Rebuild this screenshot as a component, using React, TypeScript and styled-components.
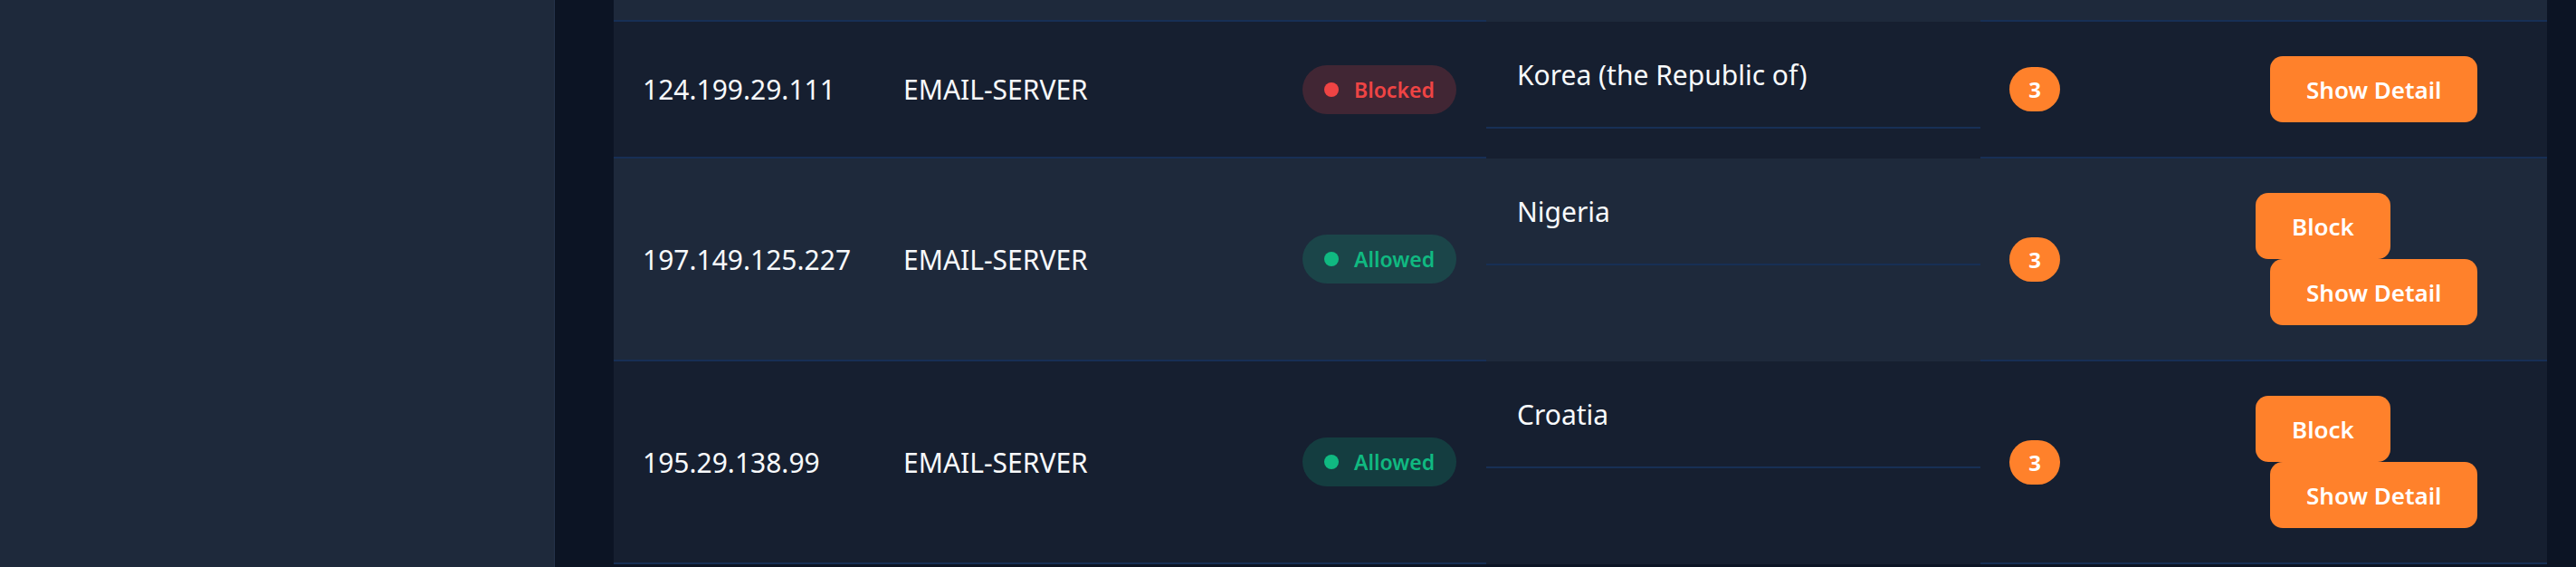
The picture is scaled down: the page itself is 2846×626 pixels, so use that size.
import React from 'react'
import styled, { createGlobalStyle } from 'styled-components'

const GlobalStyle = createGlobalStyle`
  html, body {
    margin: 0;
    padding: 0;
    background: #0c1424;
    font-family: 'Noto Sans', 'Open Sans', sans-serif;
    overflow: hidden;
  }
`

const ORANGE = '#ff812b'
const LINE = '#172f55'

const Page = styled.div`
  display: flex;
  height: 626px;
  width: 2846px;
  overflow: hidden;
  background: #0c1424;
`

const Sidebar = styled.aside`
  width: 612px;
  flex-shrink: 0;
  background: #1e293b;
  border-right: 1px solid #25334b;
`

const Content = styled.main`
  flex: 1;
  display: flex;
  padding: 0 32px 0 65px;
  background: #0c1424;
`

const Table = styled.div`
  width: 2136px;
  display: flex;
  flex-direction: column;
`

const Row = styled.div<{ $alt?: boolean; $height?: number }>`
  display: flex;
  flex-shrink: 0;
  background: ${({ $alt }) => ($alt ? '#1e293b' : '#161f30')};
  ${({ $height }) => ($height ? `height: ${$height}px;` : '')}
`

const Cell = styled.div<{ $width: number }>`
  width: ${({ $width }) => $width}px;
  flex-shrink: 0;
  box-sizing: border-box;
  display: flex;
  align-items: center;
  padding: 0 32px;
  border-bottom: 2px solid ${LINE};
  color: #f8fafc;
  font-size: 30px;
  white-space: nowrap;
`

const CountryCell = styled.div`
  width: 546px;
  flex-shrink: 0;
  box-sizing: border-box;
  border-bottom: 2px solid transparent;
`

const CountryInner = styled.div`
  height: 118px;
  box-sizing: border-box;
  padding: 36px 34px 0;
  border-bottom: 2px solid ${LINE};
  color: #f8fafc;
  font-size: 30px;
  line-height: 45px;
  white-space: nowrap;
`

const StatusBadge = styled.span<{ $blocked?: boolean }>`
  display: inline-flex;
  align-items: center;
  gap: 17px;
  height: 54px;
  padding: 0 24px;
  border-radius: 27px;
  font-size: 23px;
  font-weight: 600;
  color: ${({ $blocked }) => ($blocked ? '#ef4444' : '#10b981')};
  background: ${({ $blocked }) =>
    $blocked ? 'rgba(239, 68, 68, 0.2)' : 'rgba(16, 185, 129, 0.2)'};
`

const Dot = styled.span`
  width: 16px;
  height: 16px;
  border-radius: 50%;
  background: currentColor;
`

const CountBadge = styled.span`
  display: inline-flex;
  align-items: center;
  justify-content: center;
  width: 56px;
  height: 49px;
  border-radius: 25px;
  background: ${ORANGE};
  color: #fff;
  font-size: 24px;
  font-weight: 700;
`

const Actions = styled.div`
  width: 354px;
  flex-shrink: 0;
  box-sizing: border-box;
  padding: 38px 32px;
  border-bottom: 2px solid ${LINE};
  display: flex;
  flex-wrap: wrap;
  align-content: center;
`

const ActionButton = styled.button<{ $offset?: boolean }>`
  height: 73px;
  padding: 0 40px;
  margin-left: ${({ $offset }) => ($offset ? '16px' : '0')};
  border: none;
  border-radius: 14px;
  background: ${ORANGE};
  color: #fff;
  font-family: inherit;
  font-size: 26px;
  font-weight: 600;
  white-space: nowrap;
  cursor: pointer;
`

type Entry = {
  ip: string
  host: string
  blocked: boolean
  country: string
  count: number
}

const entries: Entry[] = [
  { ip: '124.199.29.111', host: 'EMAIL-SERVER', blocked: true, country: 'Korea (the Republic of)', count: 3 },
  { ip: '197.149.125.227', host: 'EMAIL-SERVER', blocked: false, country: 'Nigeria', count: 3 },
  { ip: '195.29.138.99', host: 'EMAIL-SERVER', blocked: false, country: 'Croatia', count: 3 },
]

const EntryRow = ({ entry, alt }: { entry: Entry; alt: boolean }) => (
  <Row $alt={alt}>
    <Cell $width={288}>{entry.ip}</Cell>
    <Cell $width={441}>{entry.host}</Cell>
    <Cell $width={235}>
      <StatusBadge $blocked={entry.blocked}>
        <Dot />
        {entry.blocked ? 'Blocked' : 'Allowed'}
      </StatusBadge>
    </Cell>
    <CountryCell>
      <CountryInner>{entry.country}</CountryInner>
    </CountryCell>
    <Cell $width={272}>
      <CountBadge>{entry.count}</CountBadge>
    </Cell>
    <Actions>
      {!entry.blocked && <ActionButton>Block</ActionButton>}
      <ActionButton $offset>Show Detail</ActionButton>
    </Actions>
  </Row>
)

const App = () => (
  <>
    <GlobalStyle />
    <Page>
      <Sidebar />
      <Content>
        <Table>
          {/* previous row, scrolled mostly out of view */}
          <Row $alt $height={24}>
            <Cell $width={288} />
            <Cell $width={441} />
            <Cell $width={235} />
            <CountryCell />
            <Cell $width={272} />
            <Cell $width={354} />
          </Row>
          {entries.map((entry, i) => (
            <EntryRow key={entry.ip} entry={entry} alt={i % 2 === 1} />
          ))}
        </Table>
      </Content>
    </Page>
  </>
)

export default App
